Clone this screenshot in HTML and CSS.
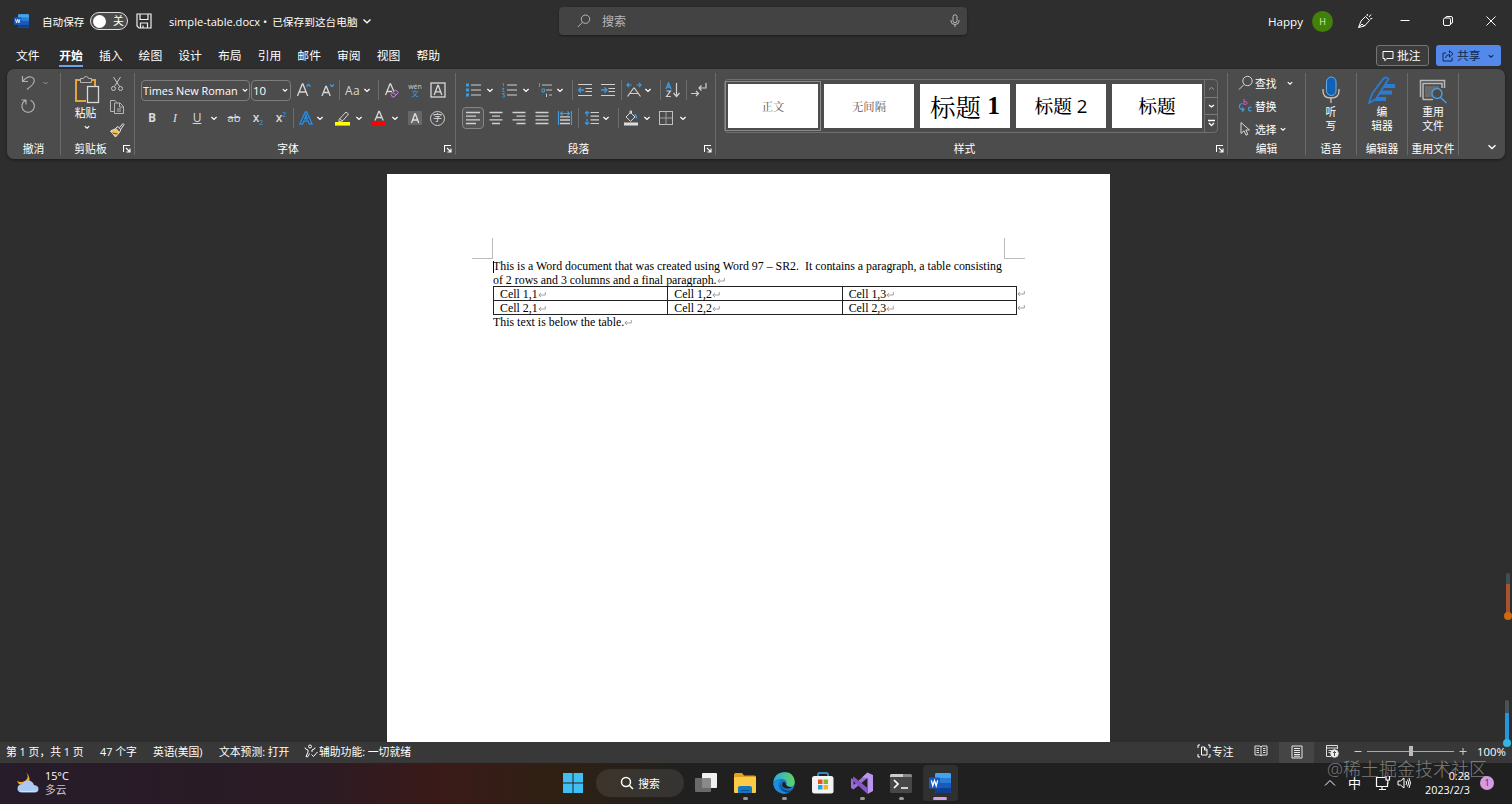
FILE: index.html
```html
<!DOCTYPE html>
<html lang="zh-CN">
<head>
    <meta charset="UTF-8">
    <meta name="viewport" content="width=device-width, initial-scale=1.0">
    <title>simple-table.docx</title>
    <link rel="stylesheet" href="styles.css">
</head>
<body>
    <!-- 共用图标 -->
    <svg class="defs" width="0" height="0">
        <symbol id="chev" viewBox="0 0 16 16"><path d="M5.4 7l2.6 2.4L10.6 7" fill="none" stroke="currentColor" stroke-width="1.3"/></symbol>
        <symbol id="launch" viewBox="0 0 8 8"><path d="M.5 7V.5H7M3 3l3.5 3.5M7 3.4V7H3.4" fill="none" stroke="#fff" stroke-width="1.1"/></symbol>
        <symbol id="mark" viewBox="0 0 8 8"><path d="M7.3 1v3H1M3 2L.8 4 3 6" fill="none" stroke="#8a8a8a" stroke-width=".8"/></symbol>
        <symbol id="word" viewBox="0 0 22 20">
            <rect x="6" y="0" width="16" height="20" rx="1.5" fill="#2b7cd3"/>
            <path d="M6 1.5Q6 0 7.5 0h13Q22 0 22 1.5V5H6z" fill="#41a5ee"/>
            <path d="M6 10h16v5H6z" fill="#185abd"/>
            <path d="M6 15h16v3.5q0 1.5-1.5 1.5h-13Q6 20 6 18.5z" fill="#103f91"/>
            <rect x="0" y="4.5" width="11" height="11" rx="1" fill="#185abd"/>
            <path d="M2.3 7.3l1.5 5.4 1.7-5.2 1.7 5.2 1.5-5.4" fill="none" stroke="#fff" stroke-width="1.3"/>
        </symbol>
    </svg>

    <!-- 标题栏 -->
    <header class="titlebar">
        <svg class="word-logo" width="15" height="14"><use href="#word"/></svg>
        <span class="autosave">自动保存</span>
        <span class="toggle"><i></i>关</span>
        <svg class="save" width="16" height="16" viewBox="0 0 16 16" fill="none" stroke="#f0f0f0" stroke-width="1.2"><path d="M1 1h14v14H3l-2-2zM4 1v5.5h8V1M4.5 15V10h7v5M7 15v-2.5"/></svg>
        <span class="filename">simple-table.docx • <b>已保存到这台电脑</b></span>
        <svg class="file-chev" width="16" height="16" viewBox="0 0 16 16"><path d="M4.5 6.5L8 9.8l3.5-3.3" fill="none" stroke="#fff" stroke-width="1.3"/></svg>
        <div class="search">
            <svg width="14" height="14" viewBox="0 0 14 14" fill="none" stroke="#b8b8b8"><circle cx="8.5" cy="5.2" r="4.2"/><path d="M5.5 8.3L.8 13"/></svg>
            <span>搜索</span>
            <svg class="mic" width="10" height="14" viewBox="0 0 10 14" fill="none" stroke="#b8b8b8"><rect x="3" y=".8" width="4" height="8" rx="2"/><path d="M1 6v1q0 3.5 4 3.5T9 7V6M5 10.5V13"/></svg>
        </div>
        <span class="user">Happy</span>
        <span class="avatar">H</span>
        <svg class="pen" width="16" height="16" viewBox="0 0 16 16" fill="none" stroke="#fff"><path d="M8.5 3.5l4 4-5 5.5-6 1.5L4 8zM1.8 14.3L5 11q1 2 3 1.5M10 3l.5-2M12 4l2-2.5M13 6l2.3-.6"/></svg>
        <svg class="min" width="12" height="12" viewBox="0 0 12 12" stroke="#fff"><path d="M1.5 5.5h9"/></svg>
        <svg class="restore" width="12" height="12" viewBox="0 0 12 12" fill="none" stroke="#fff"><rect x="1.5" y="3" width="7" height="7.5" rx="1.5"/><path d="M3.5 3q0-1.5 1.5-1.5h4q1.5 0 1.5 1.5v4q0 1.5-1.5 1.5"/></svg>
        <svg class="close" width="12" height="12" viewBox="0 0 12 12" stroke="#fff"><path d="M1.5 1.5l9 9M10.5 1.5l-9 9"/></svg>
    </header>

    <!-- 选项卡 -->
    <nav class="tabs">
        <a>文件</a><a class="active">开始</a><a>插入</a><a>绘图</a><a>设计</a><a>布局</a><a>引用</a><a>邮件</a><a>审阅</a><a>视图</a><a>帮助</a>
        <div class="tab-actions">
            <button class="comment-btn"><svg width="12" height="12" viewBox="0 0 12 12" fill="none" stroke="#fff"><path d="M1 1.5h10v7H5L2.8 10.7V8.5H1z"/></svg>批注</button>
            <button class="share-btn"><svg width="12" height="12" viewBox="0 0 12 12" fill="none" stroke="#10294f"><path d="M4 3H1v8h9V7.5M3.5 8q.5-3.5 4-3.5V7L11 3.8 7.5.8V3"/></svg>共享<svg class="share-chev" width="14" height="14"><use href="#chev"/></svg></button>
        </div>
    </nav>

    <!-- 功能区 -->
    <section class="ribbon">
        <div class="group g-undo">
            <div class="body">
                <svg width="32" height="16" viewBox="0 0 32 16" fill="none" stroke="#b0b0b0"><path d="M2.5 1v5.5H8M2.7 6.3Q7 1 11 2t3 5q-.5 2.5-7 7.5" stroke-width="1.2"/><path d="M23.5 7l2 2 2-2" stroke="#999"/></svg>
                <svg width="32" height="16" viewBox="0 0 32 16" fill="none" stroke="#b0b0b0" stroke-width="1.2"><path d="M1.5 2H6v4.5M5.8 2.3A6.3 6.3 0 1 0 10.500 2.300"/></svg>
            </div>
            <div class="label"><span>撤消</span></div>
        </div>

        <div class="group g-clip">
            <div class="body">
                <div class="paste">
                    <svg width="26" height="28" viewBox="0 0 26 28" fill="none"><path d="M7 4H2v21h10M17 4h4v7" stroke="#e8a33d" stroke-width="2"/><path d="M6.5 6.5v-4h3q.5-2 2.5-2t2.5 2h3v4z" fill="#4c4c4c" stroke="#b5b5b5"/><rect x="13.5" y="10.5" width="11" height="16" fill="#4c4c4c" stroke="#d8d8d8" stroke-width="1.3"/></svg>
                    <span>粘贴</span>
                    <svg width="14" height="14"><use href="#chev"/></svg>
                </div>
                <div class="clip-side">
                    <svg width="16" height="16" viewBox="0 0 16 16" fill="none" stroke="#c8c8c8"><path d="M4.5 1l6 9.5M11.5 1l-6 9.5"/><circle cx="4.5" cy="12.5" r="2"/><circle cx="11.5" cy="12.5" r="2"/></svg>
                    <svg width="16" height="16" viewBox="0 0 16 16" fill="none" stroke="#b5b5b5"><path d="M5 12.5H1.5v-11H6l2 2M5.5 4H11l3.5 3.5v7h-9zM10.5 4v4h4M8 10h4M8 12h4"/></svg>
                    <svg width="16" height="16" viewBox="0 0 16 16" fill="none"><path d="M1.5 9L7 6.5l3.5 4-4 4.5z" fill="#f0c060" stroke="#e0e0e0"/><path d="M3.5 11l5 1" stroke="#4c4c4c"/><path d="M7 6l2-1.5 3 3.5-1.5 2M10.5 5.5L14 1.5l1 1L12 7" stroke="#e8e8e8"/></svg>
                </div>
            </div>
            <div class="label has-launch"><span>剪贴板</span><svg width="8" height="8"><use href="#launch"/></svg></div>
        </div>

        <div class="group g-font">
            <div class="tools font-row1">
                <span class="combo name">Times New Roman<svg width="14" height="14"><use href="#chev"/></svg></span>
                <span class="combo size">10<svg width="14" height="14"><use href="#chev"/></svg></span>
                <svg viewBox="0 0 16 16" fill="none" stroke="#d8d8d8"><path d="M1.5 14L6.3 2h.6l4.8 12M3.2 10H10" stroke-width="1.3"/><path d="M10.5 4.5l2-2 2 2" stroke="#3d9be0" stroke-width="1.3"/></svg>
                <svg viewBox="0 0 16 16" fill="none" stroke="#d8d8d8"><path d="M2 14L5.8 4.5h.6L10.2 14M3.5 10.5h5.2" stroke-width="1.3"/><path d="M10 2.5l2 2 2-2" stroke="#3d9be0" stroke-width="1.3"/></svg>
                <i class="sep"></i>
                <span class="aa">Aa</span>
                <svg><use href="#chev"/></svg>
                <i class="sep"></i>
                <svg viewBox="0 0 16 16" fill="none" stroke="#d8d8d8"><path d="M1.5 13L6 2h.6L11 12M3 9.5h5" stroke-width="1.3"/><path d="M7 12.5l4.5-4.5 3 2.5-4.5 4.5h-1.5zM9 10.5l3 2.5" stroke="#c885dc" fill="#4c4c4c"/></svg>
                <span class="wen">wén<b>文</b></span>
                <svg viewBox="0 0 16 16" fill="none" stroke="#d8d8d8"><rect x="1" y="1" width="14" height="14" stroke-width="1.3"/><path d="M4.2 13L7.7 3.5h.6L11.8 13M5.5 9.8h5" stroke-width="1.3"/></svg>
            </div>
            <div class="tools font-row2">
                <span class="ch"><b>B</b></span>
                <span class="ch it">I</span>
                <span class="ch"><u>U</u></span>
                <svg><use href="#chev"/></svg>
                <span class="ch"><s>ab</s></span>
                <span class="ch script">x<sub>2</sub></span>
                <span class="ch script">x<sup>2</sup></span>
                <i class="sep"></i>
                <svg viewBox="0 0 16 16" fill="none"><path d="M2 14L7.3 2h1.4L14 14h-2.6L10.3 11H5.7L4.6 14zM6.6 9h2.8L8 5z" stroke="#2b8be0" stroke-width="1.5" fill="#333"/></svg>
                <svg><use href="#chev"/></svg>
                <svg viewBox="0 0 16 16" fill="none"><path d="M4 9.5L11 2l2.5 2L8 10.5 4 12zM4.5 8.5l3 2.5" stroke="#d8d8d8"/><rect x="0" y="12" width="15" height="3.6" fill="#ff0"/></svg>
                <svg><use href="#chev"/></svg>
                <svg viewBox="0 0 16 16" fill="none"><path d="M4 10.5L7.8 1.5h.6l3.8 9M5.3 7.5h5.6" stroke="#d8d8d8" stroke-width="1.3"/><rect x="1" y="12" width="14" height="3.6" fill="#f00"/></svg>
                <svg><use href="#chev"/></svg>
                <svg viewBox="0 0 16 16" fill="none"><rect x="1" y="1" width="14" height="14" fill="#666"/><path d="M4.5 13L7.8 4h.6l3.4 9M5.6 10h5" stroke="#e0e0e0" stroke-width="1.3"/></svg>
                <span class="circle">字</span>
            </div>
            <div class="label has-launch"><span>字体</span><svg width="8" height="8"><use href="#launch"/></svg></div>
        </div>

        <div class="group g-para">
            <div class="tools para-row1">
                <svg viewBox="0 0 16 16"><path d="M6 3h10M6 8h10M6 13h10" stroke="#d0d0d0" stroke-width="1.2"/><path d="M1 1.5h3v3H1zM1 6.5h3v3H1zM1 11.5h3v3H1z" fill="#3d9be0"/></svg>
                <svg><use href="#chev"/></svg>
                <svg viewBox="0 0 16 16" fill="none"><path d="M6 3h10M6 8h10M6 13h10" stroke="#d0d0d0" stroke-width="1.2"/><path d="M1.5 1.5h1v3M1 6.5h2l-1.5 3h2M1 11.5h2.5L2 13h1.5v2H1" stroke="#3d9be0" stroke-width=".8"/></svg>
                <svg><use href="#chev"/></svg>
                <svg viewBox="0 0 16 16" fill="none"><path d="M4 3h10M8 8h6M11 13h3" stroke="#c0c0c0" stroke-width="1.2"/><path d="M1.5 1v4M4 7h2.5v3H4z" stroke="#3d9be0"/><path d="M8.5 11.5V15" stroke="#c0c0c0"/></svg>
                <svg><use href="#chev"/></svg>
                <i class="sep"></i>
                <svg viewBox="0 0 16 16" fill="none" stroke="#d0d0d0"><path d="M1 2.5h14M8.5 6.5H15M8.5 9.5H15M1 13.5h14" stroke-width="1.2"/><path d="M7 8H2M4 5.5L1.5 8 4 10.5" stroke="#3d9be0" stroke-width="1.3"/></svg>
                <svg viewBox="0 0 16 16" fill="none" stroke="#d0d0d0"><path d="M1 2.5h14M8.5 6.5H15M8.5 9.5H15M1 13.5h14" stroke-width="1.2"/><path d="M1 8h5.5M4.5 5.5L7 8l-2.5 2.5" stroke="#3d9be0" stroke-width="1.3"/></svg>
                <i class="sep"></i>
                <svg viewBox="0 0 16 16" fill="none" stroke="#d0d0d0"><path d="M1.5 14.5L7.7 6h.6l6.2 8.5M4 11.5h8" stroke-width="1.2"/><path d="M1 3h4.5M3 1L1 3l2 2M10.5 3H15M13 1l2 2-2 2" stroke="#3d9be0" stroke-width="1.2"/></svg>
                <svg><use href="#chev"/></svg>
                <i class="sep"></i>
                <svg viewBox="0 0 16 16" fill="none"><path d="M1 7l2.5-6L6 7M2 5h3" stroke="#3d9be0" stroke-width="1.4"/><path d="M1.5 9h4l-4 5.5h4.3M11.5 1v13M8.5 11l3 3.5 3-3.5" stroke="#d0d0d0" stroke-width="1.2"/></svg>
                <i class="sep"></i>
                <svg viewBox="0 0 16 16" fill="none" stroke="#d0d0d0" stroke-width="1.2"><path d="M15 1v5H8M10.5 3.5L8 6l2.5 2.5M0 11.5h7.5M5 9l2.5 2.5L5 14"/></svg>
            </div>
            <div class="tools para-row2">
                <span class="pressed"><svg viewBox="0 0 16 16"><path d="M1 2.5h14M1 6.2h10M1 9.8h14M1 13.5h10" stroke="#d0d0d0" stroke-width="1.3"/></svg></span>
                <svg viewBox="0 0 16 16"><path d="M1.5 2.5h13M4 6.2h8M1.5 9.8h13M4 13.5h8" stroke="#d0d0d0" stroke-width="1.3"/></svg>
                <svg viewBox="0 0 16 16"><path d="M1.5 2.5h13M5.5 6.2h9M1.5 9.8h13M5.5 13.5h9" stroke="#d0d0d0" stroke-width="1.3"/></svg>
                <svg viewBox="0 0 16 16"><path d="M1.5 2.5h13M1.5 6.2h13M1.5 9.8h13M1.5 13.5h13" stroke="#d0d0d0" stroke-width="1.3"/></svg>
                <svg viewBox="0 0 16 16" fill="none"><path d="M3 6.8h10M3 10h10M3 13.5h10" stroke="#d0d0d0" stroke-width="1.3"/><path d="M1.5 1v14M14.5 1v14M4 3.5h8M5.5 1.5l-2 2 2 2M10.5 1.5l2 2-2 2" stroke="#3d9be0" stroke-width="1.2"/></svg>
                <i class="sep"></i>
                <svg viewBox="0 0 16 16" fill="none"><path d="M6.5 2.5H15M6.5 6.2H15M6.5 9.8H15M6.5 13.5H15" stroke="#d0d0d0" stroke-width="1.2"/><path d="M3 1.5v5M1 3.5l2-2 2 2M3 9v5.5M1 12.5l2 2 2-2" stroke="#3d9be0" stroke-width="1.2"/></svg>
                <svg><use href="#chev"/></svg>
                <i class="sep"></i>
                <svg viewBox="0 0 16 16" fill="none"><path d="M3 7l4.5-4.5L12 7l-4.5 4.3zM7 4V1h1.5v3" stroke="#d8d8d8"/><path d="M11.5 4.5q2 .5 2 4" stroke="#3d9be0" stroke-width="1.4"/><rect x="1" y="12.5" width="14" height="3" fill="#ddd"/></svg>
                <svg><use href="#chev"/></svg>
                <svg viewBox="0 0 16 16" fill="none" stroke="#c0c0c0"><rect x="1.5" y="1.5" width="13" height="13"/><path d="M8 1.5v13M1.5 8h13" stroke="#a0a0a0"/></svg>
                <svg><use href="#chev"/></svg>
            </div>
            <div class="label has-launch"><span>段落</span><svg width="8" height="8"><use href="#launch"/></svg></div>
        </div>

        <div class="group g-styles">
            <div class="gallery">
                <div class="card selected">正文</div>
                <div class="card">无间隔</div>
                <div class="card h1">标题 <b>1</b></div>
                <div class="card h2">标题 2</div>
                <div class="card h3">标题</div>
                <div class="scroller">
                    <svg width="13" height="17" viewBox="0 0 13 16" fill="none" stroke="#999"><path d="M4 9l2.5-2L9 9"/></svg>
                    <svg width="13" height="17" viewBox="0 0 13 16" fill="none" stroke="#fff" stroke-width="1.3"><path d="M4 7l2.5 2L9 7"/></svg>
                    <svg width="13" height="17" viewBox="0 0 13 16" fill="none" stroke="#fff" stroke-width="1.3"><path d="M3 5.5h7M4 8l2.5 2.5L9 8"/></svg>
                </div>
            </div>
            <div class="label has-launch"><span>样式</span><svg width="8" height="8"><use href="#launch"/></svg></div>
        </div>

        <div class="group g-edit">
            <div class="edit-list">
                <div><svg width="16" height="16" viewBox="0 0 16 16" fill="none" stroke="#d8d8d8"><circle cx="9.5" cy="6" r="4.7"/><path d="M6 9.5L1 14.5"/></svg>查找<svg class="far" width="14" height="14"><use href="#chev"/></svg></div>
                <div><svg width="16" height="16" viewBox="0 0 16 16" fill="none"><path d="M6 1v5.5h1.5Q9 6.500 9 5T7.500 3.500H6" stroke="#c060c8"/><path d="M4.5 5.5Q1 6 1.5 9t4 2.5M4 9.5l2 2L4 14M13.5 9.5q-3-1-3 1.5t3 1.5" stroke="#3d9be0" stroke-width="1.2"/></svg>替换</div>
                <div><svg width="16" height="16" viewBox="0 0 16 16" fill="none" stroke="#d8d8d8"><path d="M3 1.5v11l3-2.7 2 4.4 1.8-.8-2-4.4h3.700z"/></svg>选择<svg class="near" width="14" height="14"><use href="#chev"/></svg></div>
            </div>
            <div class="label"><span>编辑</span></div>
        </div>

        <div class="group g-big">
            <div class="big">
                <svg width="28" height="28" viewBox="0 0 28 28" fill="none"><rect x="9.5" y="1" width="9.5" height="18.5" rx="4.7" fill="#0f62b5" stroke="#6aaeea"/><path d="M6 13v2q0 7 8 7t8-7v-2M14 22v5" stroke="#c8c8c8" stroke-width="1.3"/></svg>
                <span>听<br>写</span>
            </div>
            <div class="label"><span>语音</span></div>
        </div>
        <div class="group g-big">
            <div class="big">
                <svg width="28" height="28" viewBox="0 0 28 28"><path d="M1 27l3-9L15 3q3-3 5.500 0L8 23z" fill="none" stroke="#2b7cd3" stroke-width="1.8"/><path d="M17 8h10v4H14zM13 14.5h11v4H10zM9 21h9v4H6z" fill="#2b7cd3"/></svg>
                <span>编<br>辑器</span>
            </div>
            <div class="label"><span>编辑器</span></div>
        </div>
        <div class="group g-big">
            <div class="big">
                <svg width="28" height="28" viewBox="0 0 28 28" fill="none"><path d="M1.5 21V4.5h24V12M4 23.5v-16h19V12M4 23.5h10" stroke="#b8b8b8" stroke-width="1.5"/><path d="M6 10h14v11H6z" fill="#6a6a6a"/><circle cx="18" cy="17.5" r="5" fill="#4c4c4c" stroke="#4a9fe0" stroke-width="1.4"/><path d="M21.5 21.5l6 5.5" stroke="#4a9fe0" stroke-width="1.4"/></svg>
                <span>重用<br>文件</span>
            </div>
            <div class="label"><span>重用文件</span></div>
        </div>
        <svg class="collapse" width="12" height="12" viewBox="0 0 12 12"><path d="M2.5 4.2L6 7.5l3.5-3.3" fill="none" stroke="#fff" stroke-width="1.4"/></svg>
    </section>

    <!-- 文档 -->
    <main class="workspace">
        <article class="page">
            <div class="corners"><i class="left"></i><i class="right"></i></div>
            <p class="caret">This is a Word document that was created using Word 97 – SR2.&nbsp; It contains a paragraph, a table consisting<br>of 2 rows and 3 columns and a final paragraph.<svg width="8" height="8"><use href="#mark"/></svg></p>
            <div class="table-line">
                <table>
                    <tr><td>Cell 1,1<svg width="8" height="8"><use href="#mark"/></svg></td><td>Cell 1,2<svg width="8" height="8"><use href="#mark"/></svg></td><td>Cell 1,3<svg width="8" height="8"><use href="#mark"/></svg></td></tr>
                    <tr><td>Cell 2,1<svg width="8" height="8"><use href="#mark"/></svg></td><td>Cell 2,2<svg width="8" height="8"><use href="#mark"/></svg></td><td>Cell 2,3<svg width="8" height="8"><use href="#mark"/></svg></td></tr>
                </table>
                <div class="row-marks"><svg width="8" height="8"><use href="#mark"/></svg><svg width="8" height="8"><use href="#mark"/></svg></div>
            </div>
            <p>This text is below the table.<svg width="8" height="8"><use href="#mark"/></svg></p>
        </article>
    </main>

    <!-- 状态栏 -->
    <footer class="status">
        <span>第 1 页，共 1 页</span>
        <span>47 个字</span>
        <span>英语(美国)</span>
        <span>文本预测: 打开</span>
        <span class="access"><svg width="14" height="14" viewBox="0 0 14 14" fill="none" stroke="#fff"><circle cx="6" cy="2.5" r="1.5"/><path d="M1 3.500q-.5 1.500 3 2.500v2l-2 4.500 1.500.5 2-3.500M11 3.500q.5 1.500-3 2.500v2M7.500 10.500l2 2L13.500 8"/></svg>辅助功能: 一切就绪</span>
        <span class="focus"><svg width="14" height="14" viewBox="0 0 14 14" fill="none" stroke="#fff"><path d="M3 1H1v3M1 10v3h2M11 1h2v3M13 10v3h-2M4.5 3h3L10 5.5V11H4.5zM7.5 3v3H10"/></svg>专注</span>
        <span class="view"><svg width="14" height="12" viewBox="0 0 14 12" fill="none" stroke="#e0e0e0"><path d="M7 2v9M1 1h5l1 1 1-1h5v9H8l-1 1-1-1H1zM2.5 3.5H5M2.5 5.5H5M2.5 7.5H5M9 3.5h2.5M9 5.5h2.5M9 7.5h2.5"/></svg></span>
        <span class="view on"><svg width="12" height="14" viewBox="0 0 12 14" fill="none" stroke="#e8e8e8"><path d="M1 1h10v12H1zM3 3.5h6M3 5.5h6M3 7.5h6M3 9.5h6M3 11.2h6"/></svg></span>
        <span class="view"><svg width="14" height="14" viewBox="0 0 14 14" fill="none" stroke="#e0e0e0"><path d="M6 12.5H1.5v-11h11V5M1.5 4h11M3.5 6.5h4M3.5 8.5h2"/><circle cx="9.5" cy="9.5" r="3.8" fill="#eee"/><path d="M9.5 7v5M8 8.5h3" stroke="#555"/></svg></span>
        <div class="zoom">
            <svg width="8" height="8" viewBox="0 0 8 8" stroke="#ccc"><path d="M.5 4.5h7"/></svg>
            <div class="track"><i></i></div>
            <svg width="8" height="8" viewBox="0 0 8 8" stroke="#ccc"><path d="M.5 4.5h7M4 1v7"/></svg>
        </div>
        <span class="percent">100%</span>
    </footer>

    <!-- 任务栏 -->
    <div class="taskbar">
        <div class="weather">
            <svg width="24" height="24" viewBox="0 0 24 24"><path d="M10 1q4 5-1 9-4 2-8 0 1 3 4 4h7q4-7-2-13z" fill="#f5a832"/><path d="M6 21.5q-4.500 0-4.500-4t4.500-4q1.500-4 6-4t6 4.500q4.500.5 4.500 4t-4 3.500z" fill="#a9c8f5"/><path d="M4 20q3 1 16 0" stroke="#dbe8fb" fill="none"/></svg>
            <div>15°C<br><span>多云</span></div>
        </div>
        <div class="apps">
            <span class="app"><svg width="22" height="22" viewBox="0 0 22 22"><path d="M1 1h9.5v9.5H1zM11.5 1H21v9.5h-9.5zM1 11.5h9.5V21H1zM11.5 11.5H21V21h-9.5z" fill="#3fc0f5"/></svg></span>
            <span class="pill"><svg width="14" height="14" viewBox="0 0 14 14" fill="none" stroke="#fff" stroke-width="1.5"><circle cx="6" cy="6" r="4.5"/><path d="M9.5 9.5L13 13"/></svg>搜索</span>
            <span class="app"><svg width="22" height="22" viewBox="0 0 22 22"><rect x="7" y="1" width="15" height="15" rx="1" fill="#f0f0f0"/><rect x="0" y="6" width="16" height="14" rx="1" fill="#777" opacity=".85"/></svg></span>
            <span class="app open"><svg width="22" height="22" viewBox="0 0 22 22"><path d="M0 3q0-2 1.5-2H8l2 2.5h10.5Q22 3.5 22 5v4H0z" fill="#e0a021"/><rect x="0" y="5" width="22" height="16" rx="1" fill="#fccb46"/><path d="M4 21v-5q0-2 2-2h10q2 0 2 2v5z" fill="#1676bf"/><path d="M7 18.5h8" stroke="#0c528c"/></svg></span>
            <span class="app open"><svg width="22" height="22" viewBox="0 0 22 22"><defs><linearGradient id="edge"><stop offset="0" stop-color="#2ba8e8"/><stop offset="1" stop-color="#60d65a"/></linearGradient></defs><circle cx="11" cy="11" r="10.7" fill="#1576cc"/><path d="M.3 10.5Q1 1 11 .3T21.7 10q0 5-5 5-4 0-3-3 0-5-5-5-6 0-8.4 3.5z" fill="url(#edge)"/><path d="M8 8q-4 3-2 8t10 4.5q-3 1.5-7 .8-8-2-8.7-9.8Q3 7.5 8 8z" fill="#1f8ddb"/><path d="M9 10q-3 5 2 7.5t9-.5l-.8 1.3q-4 3.5-8.5 1.2Q5 16 9 10z" fill="#124c86"/><path d="M9.5 11q1-2 3 0 0 4 6.5 4-3 2.500-7 1t-2.500-5z" fill="#202020"/></svg></span>
            <span class="app"><svg width="22" height="22" viewBox="0 0 22 22"><path d="M6 5V2q0-1 1-1h8q1 0 1 1v3" fill="none" stroke="#38a9e8" stroke-width="1.5"/><rect x="0" y="4" width="21.5" height="17.5" rx="2.5" fill="#f3f3f3"/><path d="M6 7.5h4.5V12H6z" fill="#e8502a"/><path d="M11.5 7.5H16V12h-4.5z" fill="#7fb921"/><path d="M6 13h4.5v4.5H6z" fill="#22a4e8"/><path d="M11.5 13H16v4.5h-4.5z" fill="#f8b61a"/></svg></span>
            <span class="app open"><svg width="22" height="22" viewBox="0 0 22 22"><path d="M0 6v10l2.5 1.5L16.5 6V.5L5 11l-2.500 2V9z" fill="#9a70d8"/><path d="M11 5.500L16.500.5 22 3v16l-5.500 3V6z" fill="#b995ed"/><path d="M2.500 4.500L16.500 16v6L1 8z" fill="#8458c8"/></svg></span>
            <span class="app open"><svg width="22" height="20" viewBox="0 0 22 20"><rect width="22" height="19" y="1" rx="1.5" fill="#474747"/><path d="M0 4V2.5Q0 1 1.5 1H13v3z" fill="#ccc"/><path d="M13 1h7.5Q22 1 22 2.5V4h-9z" fill="#888"/><path d="M4 7l4 4-4 4M11 15h7" fill="none" stroke="#fff" stroke-width="1.7"/></svg></span>
            <span class="app open current"><svg width="22" height="20"><use href="#word"/></svg></span>
        </div>
        <div class="tray">
            <svg width="12" height="12" viewBox="0 0 12 12" fill="none" stroke="#fff"><path d="M1 8.5l5-5 5 5"/></svg>
            <span class="ime">中</span>
            <svg width="16" height="16" viewBox="0 0 16 16" fill="none" stroke="#fff" stroke-width="1.2"><path d="M10 2.5H1.5v9h11V8M4 14.5h7M7 11.5v3M11 1v4h3.5V1M12.8 5v4"/></svg>
            <svg width="14" height="14" viewBox="0 0 14 14" fill="none" stroke="#fff"><path d="M1 5h2.5L7 2v10L3.5 9H1zM9 5q1.2 2 0 4M10.5 3.5q2.500 3.500 0 7M12 2q3 5 0 10"/></svg>
            <div class="clock">0:28<br>2023/2/3</div>
            <span class="badge">1</span>
        </div>
    </div>

    <!-- 悬浮在桌面上的温度计和水印 -->
    <div class="thermo hot"></div>
    <div class="thermo cold"></div>
    <div class="watermark">@稀土掘金技术社区</div>
</body>
</html>
```
FILE: styles.css
```css
* {
    box-sizing: border-box;
}

body {
    margin: 0;
    width: 1512px;
    height: 804px;
    overflow: hidden;
    position: relative;
    display: flex;
    flex-direction: column;
    background: #2e2e2e;
    color: #fff;
    font-family: "Open Sans", "Noto Sans CJK SC", sans-serif;
    font-size: 10.8px;
}

svg {
    flex-shrink: 0;
    display: block;
}

.defs {
    position: absolute;
}

/* 标题栏 */
.titlebar {
    height: 43px;
    display: grid;
    grid-template-columns: 28px 48px 46px 33px 190px 200px 709px 44px 45px 42px 42.5px 43.5px 30px;
    padding: 0 0 1px 14px;
    align-items: center;
    white-space: nowrap;
}

.autosave {
    font-size: 10.6px;
}

.toggle {
    width: 38px;
    height: 18px;
    border: 1px solid #ddd;
    border-radius: 9px;
    background: #4a4a4a;
    display: flex;
    align-items: center;
    gap: 7px;
    padding-left: 2px;
    line-height: 16px;
}

.toggle i {
    width: 13px;
    height: 13px;
    border-radius: 50%;
    background: #fff;
}

.filename {
    font-size: 11.1px;
}

.filename b {
    margin-left: 2px;
    font-weight: normal;
    font-size: 10.7px;
}

.search {
    width: 408px;
    height: 28px;
    display: flex;
    align-items: center;
    gap: 11px;
    padding: 0 7px 0 18px;
    border-radius: 4px;
    background: #434343;
    box-shadow: 0 1px 2px #1c1c1c;
    color: #b8b8b8;
    font-size: 12px;
}

.search .mic {
    margin-left: auto;
}

.user {
    font-size: 11.6px;
}

.avatar {
    width: 21px;
    height: 21px;
    border-radius: 50%;
    background: #438008;
    color: #d9f0b5;
    font-size: 9px;
    line-height: 21px;
    text-align: center;
}

/* 选项卡 */
.tabs {
    height: 26px;
    display: flex;
    padding-left: 8px;
}

.tabs a {
    width: 39.7px;
    display: flex;
    flex-direction: column;
    align-items: center;
    font-size: 11.8px;
    line-height: 25px;
    white-space: nowrap;
}

.tabs .active {
    margin-left: 3.5px;
    font-weight: bold;
}

.tabs .active::after {
    content: "";
    width: 24px;
    height: 2px;
    margin-top: -3px;
    background: #6aa3ec;
}

.tab-actions {
    margin-left: auto;
    padding: 2px 11px 0 0;
    display: flex;
    gap: 7px;
}

.tab-actions button {
    height: 21px;
    display: flex;
    align-items: center;
    border-radius: 3px;
    font-family: inherit;
    font-size: 11.8px;
    line-height: 1;
    gap: 3px;
    white-space: nowrap;
}

.comment-btn {
    width: 53px;
    padding: 0 5px;
    border: 1px solid #757575;
    background: #3c3c3c;
    color: #fff;
}

.share-btn {
    width: 65px;
    padding: 0 6px;
    border: 0;
    background: #5389ea;
    color: #10294f;
}

/* 功能区 */
.ribbon {
    height: 90px;
    margin: 0 7px;
    display: flex;
    border-radius: 7px;
    background: #4c4c4c;
    box-shadow: 0 1px 3px #1a1a1a;
}

.group {
    height: 82px;
    margin-top: 4px;
    display: flex;
    flex-direction: column;
    border-right: 1px solid #6a6a6a;
}

.label {
    margin-top: auto;
    height: 13px;
    display: grid;
    grid-template-columns: 1fr;
    align-items: center;
    line-height: 13px;
    white-space: nowrap;
}

.label.has-launch {
    grid-template-columns: 1fr 14px;
}

.label span {
    display: flex;
    justify-content: center;
}

.label svg {
    margin-left: 3px;
}

.g-undo { width: 54px; }
.g-clip { width: 74px; }
.g-font { width: 321px; }
.g-para { width: 260px; }
.g-styles { width: 512px; }
.g-edit { width: 78px; }
.g-big { width: 51px; }

.g-undo .body {
    padding: 2px 0 0 13px;
    display: grid;
    gap: 7px;
}

.g-clip .body {
    display: flex;
    padding: 3px 0 0 13px;
}

.paste {
    width: 26px;
    display: flex;
    flex-direction: column;
    align-items: center;
    line-height: 17px;
    white-space: nowrap;
}

.paste span {
    margin-left: -3px;
}

.paste span + svg {
    margin-top: -1px;
}

.clip-side {
    margin-left: 9px;
    display: grid;
    gap: 7px;
    align-content: start;
}

.tools {
    display: grid;
    height: 28px;
    align-items: center;
}

.tools > svg {
    width: 16px;
    height: 16px;
}

.sep {
    width: 1px;
    height: 20px;
    background: #6c6c6c;
}

.font-row1 {
    margin-top: 3px;
    padding-left: 6px;
    grid-template-columns: 110px 45px 24px 19px 6px 14px 19px 6px 23px 23px 16px;
}

.font-row2 {
    padding-left: 9px;
    grid-template-columns: 23px 22px 17px 20px 24px 23px 20px 5px 14px 23px 16px 20px 16px 20px 23px 16px;
}

.para-row1 {
    margin-top: 3px;
    padding-left: 9px;
    grid-template-columns: 17px 19px 17px 20px 14px 20px 5px 23px 21px 5px 14px 20px 5px 21px 5px 16px;
}

.para-row2 {
    padding-left: 9px;
    grid-template-columns: 23px 23px 23px 23px 21px 6px 14px 20px 5px 16px 19px 17px 16px;
}

.combo {
    height: 21px;
    display: flex;
    align-items: center;
    justify-content: space-between;
    border: 1px solid #7d7d7d;
    border-radius: 4px;
    padding-left: 1px;
    font-size: 10.9px;
    white-space: nowrap;
}

.combo svg {
    margin-right: -2px;
}

.combo.name { width: 109px; }
.combo.size { width: 40px; font-size: 11.5px; }

.aa {
    color: #d8d8d8;
    font-size: 12px;
    letter-spacing: .5px;
}

.wen {
    width: 16px;
    display: flex;
    flex-direction: column;
    align-items: center;
    color: #d0d0d0;
    font-size: 7px;
    line-height: 7px;
}

.wen b {
    color: #3d9be0;
    font-weight: normal;
}

.ch {
    width: 16px;
    text-align: center;
    color: #d8d8d8;
    font-size: 12px;
    line-height: 16px;
    white-space: nowrap;
}

.ch.it {
    font-family: "Liberation Serif", serif;
    font-style: italic;
    font-size: 13px;
}

.ch.script {
    font-weight: 600;
}

.ch s {
    font-size: 11px;
}

.ch sub,
.ch sup {
    color: #3d9be0;
    font-size: 7px;
    font-weight: normal;
    line-height: 0;
}

.circle {
    width: 15px;
    height: 15px;
    border: 1px solid #d0d0d0;
    border-radius: 50%;
    color: #e0e0e0;
    font-size: 9px;
    line-height: 12px;
    text-align: center;
}

.pressed {
    width: 22px;
    height: 22px;
    margin-left: -3px;
    display: grid;
    place-items: center;
    border: 1px solid #858585;
    border-radius: 4px;
    background: #555;
}

.pressed svg {
    width: 16px;
    height: 16px;
}

/* 样式库 */
.gallery {
    width: 494px;
    height: 54px;
    margin: 6px 0 0 8px;
    padding-left: 3px;
    display: flex;
    gap: 6px;
    align-items: center;
    border: 1px solid #6f6f6f;
    border-radius: 4px;
}

.card {
    width: 90px;
    height: 44px;
    flex-shrink: 0;
    display: flex;
    align-items: center;
    justify-content: center;
    background: #fff;
    color: #555;
    font-family: "Liberation Serif", "Noto Serif CJK SC", "Noto Sans CJK SC", serif;
    font-size: 11.3px;
    white-space: pre;
}

.selected {
    outline: 1px solid #8a8a8a;
    outline-offset: 2px;
}

.h1 {
    color: #000;
    font-size: 25.5px;
}

.h1 b {
    font-weight: 700;
}

.h2,
.h3 {
    color: #000;
    font-family: "Open Sans", "Noto Serif CJK SC", "Noto Sans CJK SC", sans-serif;
    font-size: 18.7px;
    font-weight: 500;
    padding-bottom: 3px;
}

.scroller {
    width: 14px;
    height: 52px;
    flex-shrink: 0;
    margin-left: -4px;
    border-left: 1px solid #6f6f6f;
}

.scroller svg + svg {
    border-top: 1px solid #7a7a7a;
}

.edit-list {
    margin-top: -2px;
    padding: 0 0 0 10px;
}

.edit-list div {
    height: 23px;
    display: flex;
    align-items: center;
    gap: 1px;
    white-space: nowrap;
}

.edit-list .far {
    margin-left: 5px;
}

.edit-list .near {
    margin-left: -2px;
}

.big {
    display: flex;
    flex-direction: column;
    align-items: center;
    padding-top: 3px;
    text-align: center;
    line-height: 14px;
}

.big span {
    margin-top: 1px;
}

.collapse {
    margin: 72px 0 0 27px;
}

/* 文档 */
.workspace {
    height: 583px;
    padding: 15px 0 0 387px;
}

.page {
    width: 723px;
    height: 568px;
    padding: 64px 85px 0 85px;
    background: #fff;
    color: #000;
    font-family: "Liberation Serif", serif;
    font-size: 11.88px;
    line-height: 14px;
}

.page p {
    margin: 0 0 0 21px;
    white-space: nowrap;
}

.page svg {
    display: inline-block;
    vertical-align: -1px;
}

.corners {
    height: 21px;
    display: flex;
    justify-content: space-between;
}

.corners i {
    width: 21px;
    border-bottom: 1px solid #bbb;
}

.corners .left { border-right: 1px solid #bbb; }
.corners .right { border-left: 1px solid #bbb; }

.page .caret {
    background: linear-gradient(#000, #000) 0 2px / 1px 12px no-repeat;
}

.table-line {
    margin: -1px 0 0 21px;
    display: flex;
}

.page table {
    width: 524px;
    flex-shrink: 0;
    table-layout: fixed;
    border-collapse: collapse;
}

.page td {
    height: 14px;
    padding: 1px 0 0 6px;
    border: 1px solid #222;
    line-height: 12px;
}

.row-marks {
    display: flex;
    flex-direction: column;
    gap: 6px;
    padding-top: 4px;
}

/* 状态栏 */
.status {
    height: 21px;
    display: grid;
    grid-template-rows: 18px;
    grid-template-columns: 94px 53px 66px 85px 893px 46px 36px 35px 35px 128px 35px;
    padding-left: 6px;
    align-items: center;
    background: #383838;
    white-space: nowrap;
}

.access,
.focus {
    display: flex;
    align-items: center;
    gap: 1px;
}

.view {
    height: 18px;
    display: grid;
    place-items: center;
}

.view.on {
    height: 21px;
    align-self: start;
    padding-bottom: 2px;
    background: #454545;
}

.percent {
    font-size: 11.3px;
}

.zoom {
    display: flex;
    align-items: center;
    gap: 5px;
    padding-left: 5px;
}

.track {
    width: 87px;
    height: 10px;
    display: flex;
    justify-content: center;
    background: linear-gradient(#aaa, #aaa) 0 5px / 100% 1px no-repeat;
}

.track i {
    width: 4px;
    background: #bbb;
}

/* 任务栏 */
.taskbar {
    height: 41px;
    padding-bottom: 2px;
    display: flex;
    align-items: center;
    background: linear-gradient(90deg, #261c2a 0, #2b1b24 320px, #3b1a18 440px, #2e2113 560px, #202020 690px);
}

.weather {
    width: 553.5px;
    padding: 0 0 0 16px;
    display: flex;
    align-items: center;
    gap: 5px;
    line-height: 14px;
}

.weather span {
    color: #c8c0c8;
}

.apps {
    display: flex;
    align-items: center;
}

.app {
    width: 39px;
    height: 36px;
    display: grid;
    place-items: center;
    position: relative;
}

.open::after {
    content: "";
    position: absolute;
    bottom: 1px;
    left: 17px;
    width: 5px;
    height: 3px;
    border-radius: 2px;
    background: #999;
}

.current {
    width: 35px;
    margin-left: 2px;
    border-radius: 4px;
    background: #303030;
}

.current::after {
    left: 10px;
    width: 14px;
    background: #d9a0e0;
}

.pill {
    width: 88px;
    height: 28px;
    margin: 0 2.5px 0 3.5px;
    display: flex;
    align-items: center;
    justify-content: center;
    gap: 4px;
    border-radius: 14px;
    background: rgba(255, 255, 255, .09);
}

.tray {
    margin: 0 18px 0 auto;
    display: grid;
    grid-template-columns: 24px 27px 22px 16px 57px 24px;
    align-items: center;
}

.ime {
    font-size: 13px;
}

.clock {
    text-align: right;
    line-height: 14px;
}

.badge {
    width: 14px;
    height: 14px;
    margin-left: 10px;
    border-radius: 50%;
    background: #d899e4;
    color: #333;
    font-size: 9px;
    line-height: 14px;
    text-align: center;
}

/* 温度计 */
.thermo {
    position: absolute;
    width: 4px;
    height: 43px;
    right: 2px;
    border-radius: 3px 3px 0 0;
}

.thermo::after {
    content: "";
    position: absolute;
    bottom: -4px;
    left: -2px;
    width: 8px;
    height: 8px;
    border-radius: 50%;
}

.hot {
    top: 573px;
    background: linear-gradient(#3c5055 11px, #a8532f 11px);
}

.hot::after { background: #cf6a10; }

.cold {
    top: 700px;
    right: 3px;
    background: linear-gradient(#46545a 13px, #2595dc 13px);
}

.cold::after { background: #35b5e0; }

.watermark {
    position: absolute;
    left: 1327px;
    top: 756px;
    color: rgba(255, 255, 255, .42);
    font-size: 18px;
    line-height: 26px;
    font-weight: 300;
    white-space: nowrap;
}
```
